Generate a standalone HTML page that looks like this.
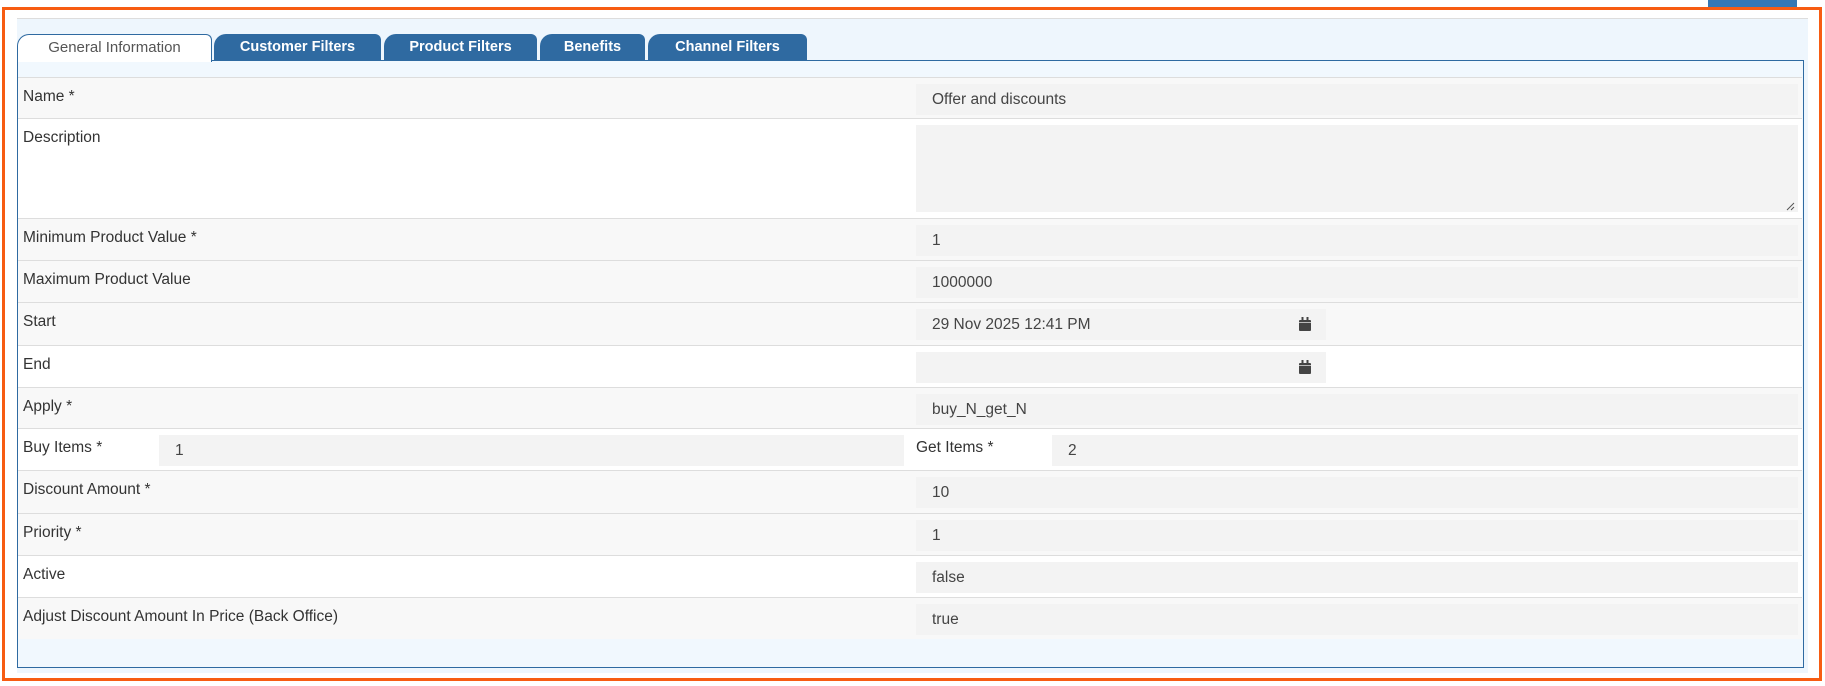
<!DOCTYPE html>
<html><head><meta charset="utf-8"><style>
*{box-sizing:border-box;margin:0;padding:0}
body{width:1825px;height:686px;background:#fff;position:relative;overflow:hidden;font-family:"Liberation Sans",sans-serif;color:#333}
.topblk{position:absolute;left:1708px;top:0;width:89px;height:7px;background:#3478b5}
.orange{position:absolute;left:2px;top:7px;width:1820px;height:674px;border:3px solid #f75c12}
.outer{position:absolute;left:17px;top:18px;width:1791px;height:655px;background:#eef6fd;border-top:1px solid #ddd}
.tab{position:absolute;top:0;height:27px;background:#2f6aa1;color:#fff;font-size:14.5px;font-weight:bold;text-align:center;line-height:27px;border-radius:12px 6px 0 0}
.tab.act{background:#fff;color:#555;font-weight:normal;border:1px solid #2f6aa1;border-bottom:none;line-height:25px;height:28px;z-index:2;font-size:15px}
.box{position:absolute;left:17px;top:60px;width:1787px;height:608px;border:1px solid #2f6aa1;background:#f1f8fe}
.row{position:absolute;left:18px;width:1784px;border-top:1px solid #ddd;background:#f8f8f8;font-size:15.5px}
.row.w{background:#fff}
.lbl{position:absolute;left:5px;top:10px;color:#333}
.inp{position:absolute;background:#f3f3f3;height:31px;top:6px;font-size:15.5px;line-height:32px;padding-left:16px;color:#444}
.cal{position:absolute;right:15px;top:8px;width:12px;height:14px}
</style></head><body>
<div class="topblk"></div>
<div class="orange"></div>
<div class="outer"></div>
<div class="box"></div>
<div class="tab act" style="left:17px;top:34px;width:195px">General Information</div>
<div class="tab" style="left:214px;top:34px;width:167px">Customer Filters</div>
<div class="tab" style="left:384px;top:34px;width:153px">Product Filters</div>
<div class="tab" style="left:540px;top:34px;width:105px">Benefits</div>
<div class="tab" style="left:648px;top:34px;width:159px">Channel Filters</div>

<div class="row" style="top:77px;height:42px"><span class="lbl">Name *</span><div class="inp" style="left:898px;width:882px">Offer and discounts</div></div>
<div class="row w" style="top:118px;height:100px"><span class="lbl">Description</span><div class="inp" style="left:898px;width:882px;height:87px"></div>
<svg style="position:absolute;left:1767px;top:82px" width="10" height="10"><path d="M2 9 L9 2 M6 9 L9 6" stroke="#555" stroke-width="1"/></svg></div>
<div class="row" style="top:218px;height:42px"><span class="lbl">Minimum Product Value *</span><div class="inp" style="left:898px;width:882px">1</div></div>
<div class="row" style="top:260px;height:42px"><span class="lbl">Maximum Product Value</span><div class="inp" style="left:898px;width:882px">1000000</div></div>
<div class="row" style="top:302px;height:43px"><span class="lbl">Start</span><div class="inp" style="left:898px;width:410px">29 Nov 2025 12:41 PM<svg class="cal" viewBox="0 0 12 14"><rect x="0" y="3" width="12" height="11" rx="1" fill="#444"/><rect x="2.5" y="0" width="2" height="4" fill="#444"/><rect x="7.5" y="0" width="2" height="4" fill="#444"/><rect x="0" y="5" width="12" height="1" fill="#bbb"/></svg></div></div>
<div class="row w" style="top:345px;height:42px"><span class="lbl">End</span><div class="inp" style="left:898px;width:410px"><svg class="cal" viewBox="0 0 12 14"><rect x="0" y="3" width="12" height="11" rx="1" fill="#444"/><rect x="2.5" y="0" width="2" height="4" fill="#444"/><rect x="7.5" y="0" width="2" height="4" fill="#444"/><rect x="0" y="5" width="12" height="1" fill="#bbb"/></svg></div></div>
<div class="row" style="top:387px;height:41px"><span class="lbl">Apply *</span><div class="inp" style="left:898px;width:882px">buy_N_get_N</div></div>
<div class="row w" style="top:428px;height:42px"><span class="lbl">Buy Items *</span><div class="inp" style="left:141px;width:745px">1</div><span class="lbl" style="left:898px">Get Items *</span><div class="inp" style="left:1034px;width:746px">2</div></div>
<div class="row" style="top:470px;height:43px"><span class="lbl">Discount Amount *</span><div class="inp" style="left:898px;width:882px">10</div></div>
<div class="row" style="top:513px;height:42px"><span class="lbl">Priority *</span><div class="inp" style="left:898px;width:882px">1</div></div>
<div class="row w" style="top:555px;height:42px"><span class="lbl">Active</span><div class="inp" style="left:898px;width:882px">false</div></div>
<div class="row" style="top:597px;height:42px"><span class="lbl">Adjust Discount Amount In Price (Back Office)</span><div class="inp" style="left:898px;width:882px">true</div></div>
</body></html>
